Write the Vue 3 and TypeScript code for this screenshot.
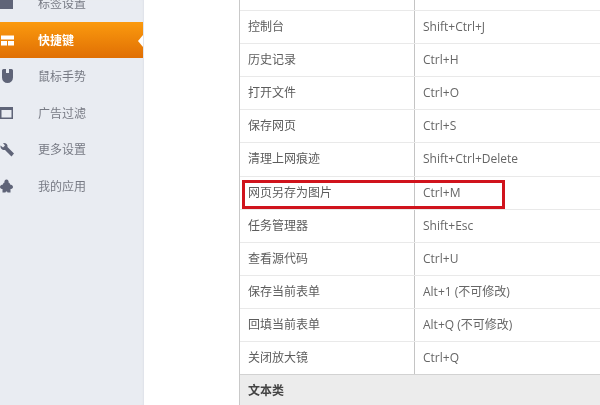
<script setup lang="ts">
interface NavItem { label: string; icon: string; active?: boolean }
const nav: NavItem[] = [
  { label: '标签设置', icon: 'tag' },
  { label: '快捷键', icon: 'keys', active: true },
  { label: '鼠标手势', icon: 'mouse' },
  { label: '广告过滤', icon: 'window' },
  { label: '更多设置', icon: 'wrench' },
  { label: '我的应用', icon: 'puzzle' },
]
const rows: [string, string][] = [
  ['', ''],
  ['控制台', 'Shift+Ctrl+J'],
  ['历史记录', 'Ctrl+H'],
  ['打开文件', 'Ctrl+O'],
  ['保存网页', 'Ctrl+S'],
  ['清理上网痕迹', 'Shift+Ctrl+Delete'],
  ['网页另存为图片', 'Ctrl+M'],
  ['任务管理器', 'Shift+Esc'],
  ['查看源代码', 'Ctrl+U'],
  ['保存当前表单', 'Alt+1 (不可修改)'],
  ['回填当前表单', 'Alt+Q (不可修改)'],
  ['关闭放大镜', 'Ctrl+Q'],
]
</script>

<template>
  <div class="page">
    <aside class="side">
      <ul class="nav">
        <li v-for="n in nav" :key="n.label" class="item" :class="{ active: n.active }">
          <span class="ico">
            <svg width="20" height="18" viewBox="0 0 20 18">
              <path v-if="n.icon === 'tag'" d="M0 3h13v12H0z" fill="#5f6478" />
              <path v-else-if="n.icon === 'keys'" d="M1 4.500h13v4H1zM1 10h6v4.500H1zM8 10h6v4.500H8z" fill="#fff" />
              <path v-else-if="n.icon === 'mouse'" d="M2 3.500Q2 2 3.500 2H6v4h3V2h2.500Q13 2 13 3.500V10.500a5.500 5.500 0 0 1-11 0z" fill="#5f6478" />
              <path v-else-if="n.icon === 'window'" d="M0 3h13v12H0zM1.500 6V13.500h10V6z" fill="#5f6478" fill-rule="evenodd" />
              <path v-else-if="n.icon === 'wrench'" d="M.5 5.500 3 7.500 5 5.500 3 3C5.500 2.500 8 4 7.500 7L14 13.500 11.500 16.500 5 10C2.500 10.500 0 8.500.5 5.500z" fill="#5f6478" />
              <path v-else d="M0 10c0-1.500 1.500-2.500 3-2.500C3 6.500 3.500 5.500 4.500 5.500 4 4 5 2.500 6.500 2.500S9 4 8.500 5.500C9.500 5.500 10 6.500 10 7.500 11.500 7.500 13 8.500 13 10s-1.500 2-2.500 2V15.500H7.500C7.500 14 5.500 14 5.500 15.500H2.500V12C1.500 12 0 11.500 0 10z" fill="#5f6478" />
            </svg>
          </span>
          <span class="label">{{ n.label }}</span>
          <i v-if="n.active" class="notch"></i>
        </li>
      </ul>
    </aside>

    <main class="main">
      <div class="table">
        <div v-for="(r, i) in rows" :key="i" class="row">
          <div class="c1">{{ r[0] }}</div>
          <div class="c2">{{ r[1] }}</div>
        </div>
        <div class="section">文本类</div>
      </div>
      <div class="mark"></div>
    </main>
  </div>
</template>

<style>
html, body { margin: 0; padding: 0; background: #fff; }
</style>

<style scoped>
.page {
  display: flex;
  width: 600px;
  height: 405px;
  overflow: hidden;
  background: #fff;
  font-family: "Open Sans", "Noto Sans CJK SC", sans-serif;
  font-size: 12px;
  color: #5c5c5c;
  filter: blur(0.35px);
}
.side {
  width: 144px;
  flex: none;
  background: #e9ecf2;
  box-shadow: inset -2px 0 2px -1px #dfe2e8;
}
.nav {
  list-style: none;
  margin: -15px 0 0;
  padding: 0;
}
.item {
  position: relative;
  display: flex;
  align-items: center;
  height: 36.5px;
  color: #777a84;
}
.ico {
  display: flex;
  width: 38px;
  flex: none;
}
.active {
  color: #fff;
  font-weight: 700;
  background: linear-gradient(#fb9a0e, #e06f04);
  margin-right: 1px;
}
.notch {
  position: absolute;
  right: 0;
  top: 13px;
  border-style: solid;
  border-width: 6px 5px 6px 0;
  border-color: transparent #fff transparent transparent;
}
.main {
  position: relative;
  flex: 1;
  padding-left: 95px;
}
.table {
  margin-top: -22px;
  border-left: 1px solid #c9c9c9;
}
.row {
  display: flex;
  height: 33.1px;
  box-sizing: border-box;
  border-bottom: 1px solid #e9e9e9;
  line-height: 32px;
}
.c1 {
  width: 175px;
  flex: none;
  padding-left: 8px;
  box-sizing: border-box;
  border-right: 1px solid #c4c4c4;
}
.c2 {
  padding-left: 8px;
  color: #666;
}
.section {
  height: 36px;
  line-height: 32px;
  padding-left: 8px;
  background: #ececec;
  border-top: 1px solid #d2d2d2;
  margin-top: -1px;
  font-weight: 700;
  color: #444;
}
.mark {
  position: absolute;
  left: 98px;
  top: 180px;
  width: 263px;
  height: 29px;
  box-sizing: border-box;
  border: 3px solid #d0131c;
}
</style>
